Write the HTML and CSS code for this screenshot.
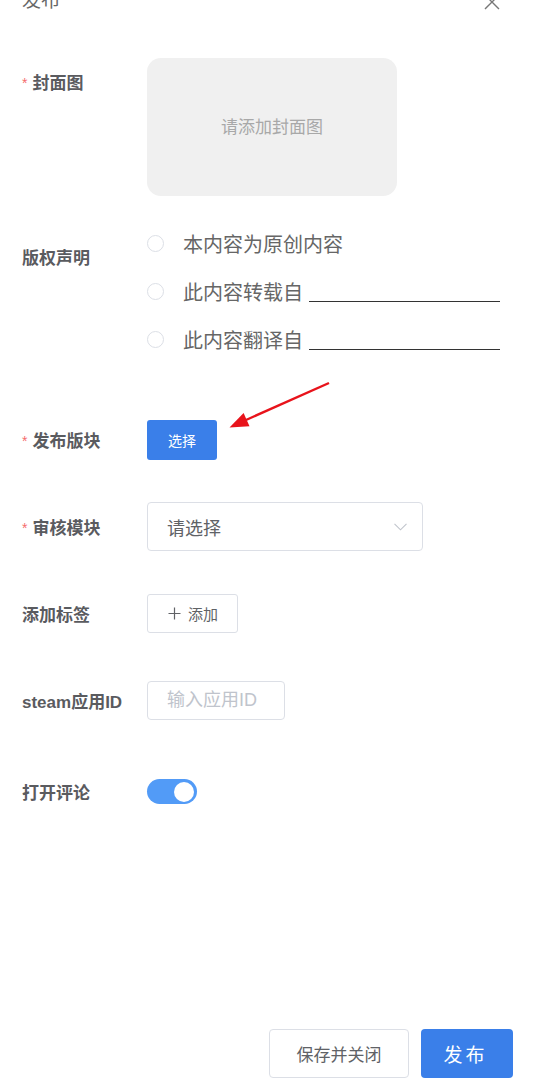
FILE: index.html
```html
<!DOCTYPE html>
<html lang="zh-CN">
<head>
    <meta charset="UTF-8">
    <meta name="viewport" content="width=device-width, initial-scale=1.0">
    <title>发布</title>
    <link rel="stylesheet" href="styles.css">
</head>
<body>

    <!-- Dialog header -->
    <header class="dialog-header">
        <span class="dialog-title">发布</span>
        <svg class="close-icon" width="16" height="16" viewBox="0 0 16 16">
            <path d="M1 1 L15 15 M15 1 L1 15" stroke="#777" stroke-width="1.4" fill="none"/>
        </svg>
    </header>

    <!-- Form -->
    <main class="form">
        <div class="form-item top">
            <label class="form-label cover-label"><span class="required">*</span>封面图</label>
            <div class="cover-box">请添加封面图</div>
        </div>

        <div class="form-item top copyright">
            <label class="form-label copyright-label">版权声明</label>
            <div class="radio-group">
                <div class="radio-option"><span class="radio"></span>本内容为原创内容</div>
                <div class="radio-option"><span class="radio"></span>此内容转载自<span class="line-input"></span></div>
                <div class="radio-option"><span class="radio"></span>此内容翻译自<span class="line-input"></span></div>
            </div>
        </div>

        <div class="form-item">
            <label class="form-label"><span class="required">*</span>发布版块</label>
            <button class="btn-primary small">选择</button>
        </div>

        <div class="form-item">
            <label class="form-label"><span class="required">*</span>审核模块</label>
            <div class="select">
                <span>请选择</span>
                <svg width="13" height="8" viewBox="0 0 13 8">
                    <path d="M0.5 0.8 L6.5 6.8 L12.5 0.8" stroke="#c0c4cc" stroke-width="1.1" fill="none"/>
                </svg>
            </div>
        </div>

        <div class="form-item">
            <label class="form-label">添加标签</label>
            <button class="btn-add">
                <svg width="13" height="13" viewBox="0 0 13 13">
                    <path d="M6.5 0.5 V12.5 M0.5 6.5 H12.5" stroke="#606266" stroke-width="1.2" fill="none"/>
                </svg>
                添加
            </button>
        </div>

        <div class="form-item">
            <label class="form-label">steam应用ID</label>
            <input class="text-input" type="text" placeholder="输入应用ID">
        </div>

        <div class="form-item switch-row">
            <label class="form-label">打开评论</label>
            <span class="switch"><span class="switch-knob"></span></span>
        </div>
    </main>

    <!-- Footer buttons -->
    <footer class="dialog-footer">
        <button class="btn-default">保存并关闭</button>
        <button class="btn-primary large">发布</button>
    </footer>

    <!-- Annotation arrow -->
    <svg class="arrow" width="110" height="55" viewBox="0 0 110 55">
        <line x1="104" y1="5" x2="21" y2="42" stroke="#e8131b" stroke-width="2.4"/>
        <polygon points="4.5,49.5 24.5,48.3 18.6,35" fill="#e8131b"/>
    </svg>

</body>
</html>
```

FILE: styles.css
```css
/* Basic Styling */
html, body {
    height: 100%;
    margin: 0;
    padding: 0;
}

body {
    font-family: "Liberation Sans", "Noto Sans CJK SC", sans-serif;
    background: #ffffff;
    color: #606266;
    display: flex;
    flex-direction: column;
    position: relative; /* for the annotation arrow */
    overflow: hidden;
}

/* Header, cut off at the top */
.dialog-header {
    display: flex;
    justify-content: space-between;
    align-items: flex-start;
    height: 20px;
    margin-top: -9px;
    padding: 0 37px 0 22px;
}

.dialog-title {
    font-size: 19px;
    line-height: 20px;
    color: #666;
}

.close-icon {
    margin-top: 3px;
}

/* Form */
.form {
    padding: 47px 0 0 22px;
}

.form-item {
    display: flex;
    align-items: center;
    height: 87px;
}

.form-item.top {
    align-items: flex-start;
    height: auto;
}

.form-item.copyright {
    margin-top: 23px;
    margin-bottom: 33px;
}

.form-item.switch-row {
    margin-top: 4px;
}

.form-label {
    width: 125px;
    flex-shrink: 0;
    font-size: 17px;
    font-weight: bold;
    color: #5a5b5f;
    white-space: nowrap;
}

.cover-label {
    line-height: 50px;
}

.copyright-label {
    padding-top: 28px;
    line-height: 24px;
}

.required {
    color: #f56c6c;
    font-size: 14px;
    font-weight: normal;
    margin-right: 5px;
    vertical-align: 1px;
}

.cover-box {
    width: 250px;
    height: 138px;
    box-sizing: border-box;
    padding-bottom: 4px;
    border-radius: 14px;
    background: #f0f0f0;
    color: #a8a8a8;
    font-size: 17px;
    display: flex;
    align-items: center;
    justify-content: center;
}

/* Radios */
.radio-group {
    display: flex;
    flex-direction: column;
}

.radio-option {
    display: flex;
    align-items: center;
    height: 48px;
    font-size: 20px;
    color: #666;
}

.radio {
    width: 15px;
    height: 15px;
    border: 1px solid #dcdfe6;
    border-radius: 50%;
    margin-right: 19px;
    box-sizing: content-box;
}

.line-input {
    display: inline-block;
    width: 191px;
    height: 20px;
    border-bottom: 1px solid #333;
    margin-left: 6px;
}

/* Buttons */
button {
    font-family: inherit;
    cursor: pointer;
}

.btn-primary {
    background: #3a7fe9;
    color: #ffffff;
    border: none;
    border-radius: 4px;
}

.btn-primary.small {
    width: 70px;
    height: 40px;
    font-size: 14px;
    border-radius: 3px;
}

.btn-primary.large {
    width: 92px;
    height: 49px;
    font-size: 19px;
    letter-spacing: 3px;
    padding-left: 3px;
}

.btn-default {
    width: 140px;
    height: 49px;
    background: #ffffff;
    border: 1px solid #dcdfe6;
    border-radius: 4px;
    color: #606266;
    font-size: 17px;
}

.btn-add {
    width: 91px;
    height: 39px;
    background: #ffffff;
    border: 1px solid #dcdfe6;
    border-radius: 3px;
    color: #606266;
    font-size: 15px;
    display: flex;
    align-items: center;
    gap: 7px;
    padding: 0 0 0 20px;
}

/* Select */
.select {
    width: 276px;
    height: 49px;
    box-sizing: border-box;
    border: 1px solid #dcdfe6;
    border-radius: 4px;
    display: flex;
    align-items: center;
    justify-content: space-between;
    padding: 0 15px 0 19px;
    font-size: 18px;
    color: #606266;
}

/* Text input */
.text-input {
    width: 138px;
    height: 39px;
    box-sizing: border-box;
    border: 1px solid #dcdfe6;
    border-radius: 4px;
    padding: 0 0 0 19px;
    font-family: inherit;
    font-size: 18px;
    color: #606266;
    outline: none;
}

.text-input::placeholder {
    color: #c0c4cc;
}

/* Switch */
.switch {
    width: 50px;
    height: 25px;
    border-radius: 13px;
    background: #529bf7;
    display: flex;
    align-items: center;
    justify-content: flex-end;
    padding-right: 3px;
    box-sizing: border-box;
}

.switch-knob {
    width: 20px;
    height: 20px;
    border-radius: 50%;
    background: #ffffff;
}

/* Footer */
.dialog-footer {
    margin-top: auto;
    display: flex;
    justify-content: flex-end;
    gap: 12px;
    padding: 0 24px 14px 0;
}

/* Red arrow laid over the form */
.arrow {
    position: absolute;
    left: 225px;
    top: 378px;
}
```
